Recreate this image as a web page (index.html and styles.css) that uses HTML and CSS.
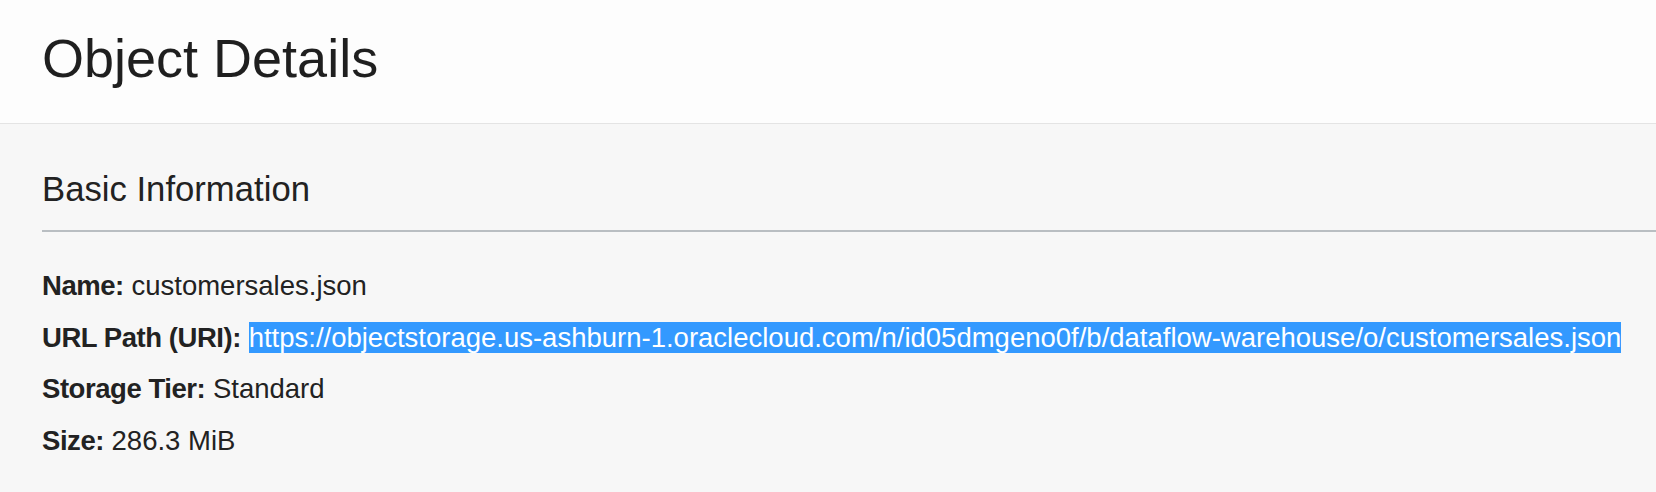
FILE: index.html
```html
<!DOCTYPE html>
<html lang="en">
<head>
<meta charset="utf-8">
<title>Object Details</title>
<link rel="stylesheet" href="styles.css">
</head>
<body>
<header class="page-header">
  <h1 class="page-title">Object Details</h1>
</header>
<main class="content">
  <section class="panel">
    <h2 class="panel-title">Basic Information</h2>
    <ul class="info-list">
      <li class="info-row"><span class="info-label">Name:</span> customersales.json</li>
      <li class="info-row"><span class="info-label">URL Path (URI):</span> <span class="selected">https://objectstorage.us-ashburn-1.oraclecloud.com/n/id05dmgeno0f/b/dataflow-warehouse/o/customersales.json</span></li>
      <li class="info-row"><span class="info-label">Storage Tier:</span> Standard</li>
      <li class="info-row"><span class="info-label">Size:</span> 286.3 MiB</li>
    </ul>
  </section>
</main>
</body>
</html>
```

FILE: styles.css
```css
html, body {
  margin: 0;
  padding: 0;
}
body {
  background: #f7f7f7;
  color: #222222;
  font-family: "Liberation Sans", Arial, Helvetica, sans-serif;
  width: 1656px;
  height: 492px;
  overflow: hidden;
}
.page-header {
  background: #fdfdfd;
  height: 124px;
  box-sizing: border-box;
  border-bottom: 1px solid #e4e4e4;
  padding: 31px 0 0 42px;
}
.page-title {
  margin: 0;
  font-size: 54px;
  line-height: 54px;
  font-weight: normal;
  color: #1f1f1f;
}
.content {
  padding: 48px 0 0 42px;
}
.panel-title {
  margin: 0;
  font-size: 34.7px;
  line-height: 35px;
  font-weight: normal;
  color: #222222;
  padding-bottom: 23px;
  border-bottom: 2px solid #b9bec2;
}
.info-list {
  list-style: none;
  margin: 28px 0 0;
  padding: 0;
}
.info-row {
  font-size: 27.5px;
  line-height: 51.7px;
  color: #222222;
  white-space: nowrap;
}
.info-label {
  font-weight: bold;
  letter-spacing: -0.45px;
}
.selected {
  background: #3399ff;
  color: #ffffff;
}
```
